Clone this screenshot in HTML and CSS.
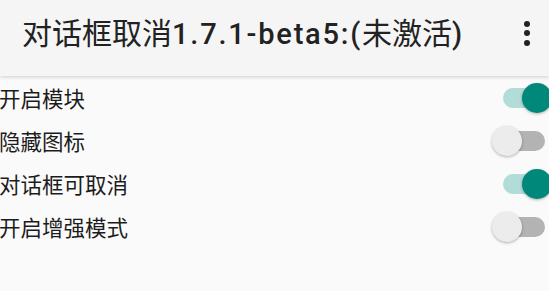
FILE: index.html
```html
<!DOCTYPE html>
<html lang="zh-CN">
<head>
  <meta charset="UTF-8">
  <title>对话框取消</title>
  <link rel="stylesheet" href="styles.css">
</head>
<body>
  <header class="toolbar">
    <h1 class="title">对话框取消<span class="latin">1.7.1-beta5:(</span>未激活<span class="latin">)</span></h1>
    <div class="overflow">
      <span class="dot"></span>
      <span class="dot"></span>
      <span class="dot"></span>
    </div>
  </header>

  <ul class="prefs">
    <li class="pref">
      <span class="label">开启模块</span>
      <span class="switch on"><span class="track"></span><span class="thumb"></span></span>
    </li>
    <li class="pref">
      <span class="label">隐藏图标</span>
      <span class="switch"><span class="track"></span><span class="thumb"></span></span>
    </li>
    <li class="pref">
      <span class="label">对话框可取消</span>
      <span class="switch on"><span class="track"></span><span class="thumb"></span></span>
    </li>
    <li class="pref">
      <span class="label">开启增强模式</span>
      <span class="switch"><span class="track"></span><span class="thumb"></span></span>
    </li>
  </ul>
</body>
</html>
```

FILE: styles.css
```css
body {
  margin: 0;
  background: #fafafa;
  color: #212121;
  font-family: Roboto, "Noto Sans CJK SC", sans-serif;
  overflow: hidden;
}

/* toolbar */

.toolbar {
  height: 76px;
  background: #f5f5f5;
  display: flex;
  align-items: center;
  padding: 0 16px 0 22px;
  box-shadow: 0 1px 4px rgba(0, 0, 0, 0.18);
  position: relative;
}

.title {
  flex: 1;
  margin: 0;
  margin-top: -14px;
  font-size: 30px;
  font-weight: 400;
  white-space: nowrap;
  color: #222;
}

.latin {
  font-weight: 500;
  font-size: 29px;
  letter-spacing: 1.8px;
}

.overflow {
  display: flex;
  flex-direction: column;
  gap: 3.5px;
  margin-top: -10px;
  margin-right: 3px;
}

.dot {
  width: 6px;
  height: 6px;
  border-radius: 50%;
  background: #222;
}

/* preference rows */

.prefs {
  list-style: none;
  margin: 0;
  padding: 0;
}

.pref {
  height: 43px;
  display: flex;
  align-items: center;
  justify-content: space-between;
}

.label {
  font-size: 21.5px;
  margin-left: -1px;
  color: #1c1c1c;
}

.switch {
  position: relative;
  width: 60px;
  height: 30px;
  margin-right: -3px;
}

.track {
  position: absolute;
  left: 11px;
  top: 5px;
  width: 42px;
  height: 20px;
  border-radius: 10px;
  background: #b3b3b3;
}

.thumb {
  position: absolute;
  left: 0;
  top: 0;
  width: 30px;
  height: 30px;
  border-radius: 50%;
  background: #ececec;
  box-shadow: 0 1px 3px rgba(0, 0, 0, 0.3);
}

.switch.on .track {
  background: #b2dcd7;
}

.switch.on .thumb {
  left: 30px;
  background: #00897b;
}
```
